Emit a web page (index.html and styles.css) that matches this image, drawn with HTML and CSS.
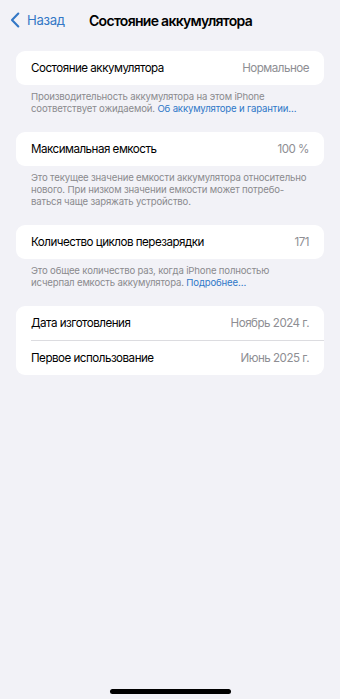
FILE: index.html
```html
<!DOCTYPE html>
<html lang="ru">
<head>
<meta charset="utf-8">
<link rel="stylesheet" href="styles.css">
</head>
<body>
<div class="screen">
  <header class="nav">
    <div class="back">
      <svg class="chev" width="10" height="16" viewBox="0 0 10 16"><path d="M8.3 1.5 L2 8 L8.3 14.5" fill="none" stroke="#3478c6" stroke-width="2.1" stroke-linecap="round" stroke-linejoin="round"/></svg>
      <span class="back-text">Назад</span>
    </div>
    <div class="title">Состояние аккумулятора</div>
  </header>

  <main class="content">
    <section class="group">
      <div class="card">
        <div class="row"><span class="label">Состояние аккумулятора</span><span class="value">Нормальное</span></div>
      </div>
      <p class="note">Производительность аккумулятора на этом iPhone<br>соответствует ожидаемой. <span class="link">Об аккумуляторе и гарантии…</span></p>
    </section>

    <section class="group">
      <div class="card">
        <div class="row"><span class="label">Максимальная емкость</span><span class="value">100 %</span></div>
      </div>
      <p class="note">Это текущее значение емкости аккумулятора относительно<br>нового. При низком значении емкости может потребо-<br>ваться чаще заряжать устройство.</p>
    </section>

    <section class="group">
      <div class="card">
        <div class="row"><span class="label">Количество циклов перезарядки</span><span class="value">171</span></div>
      </div>
      <p class="note">Это общее количество раз, когда iPhone полностью<br>исчерпал емкость аккумулятора. <span class="link">Подробнее…</span></p>
    </section>

    <section class="group">
      <div class="card">
        <div class="row divided"><span class="label">Дата изготовления</span><span class="value">Ноябрь 2024 г.</span></div>
        <div class="row"><span class="label">Первое использование</span><span class="value">Июнь 2025 г.</span></div>
      </div>
    </section>
  </main>

  <div class="home-bar"></div>
</div>
</body>
</html>
```
FILE: styles.css
```css
html, body {
  margin: 0;
  padding: 0;
  background: #f2f2f7;
}
body {
  font-family: Inter, "Noto Sans", sans-serif;
  color: #000;
  -webkit-font-smoothing: antialiased;
}
.screen {
  width: 340px;
  height: 699px;
  display: flex;
  flex-direction: column;
  overflow: hidden;
}
.nav {
  height: 40px;
  display: flex;
  align-items: center;
  padding-left: 10px;
  box-sizing: border-box;
}
.back {
  display: flex;
  align-items: center;
  gap: 7px;
  width: 79px;
}
.chev { display: block; }
.back-text {
  color: #3478c6;
  font-size: 13.2px;
  letter-spacing: -0.35px;
}
.title {
  font-size: 14px;
  font-weight: 600;
  letter-spacing: -0.7px;
}
.content {
  flex: 1;
  padding: 11px 16px 0;
  display: flex;
  flex-direction: column;
  gap: 17px;
}
.group { margin: 0; }
.card {
  background: #fff;
  border-radius: 9px;
  padding-left: 15px;
}
.row {
  height: 34px;
  display: flex;
  align-items: center;
  justify-content: space-between;
  padding-right: 15px;
  font-size: 11.6px;
  letter-spacing: -0.5px;
}
.divided {
  border-bottom: 0.5px solid #dcdce0;
}
.label { color: #000; }
.value { color: #8e8e93; }
.note {
  margin: 6px 0 0;
  padding: 0 2px 0 15px;
  font-size: 9.6px;
  line-height: 12px;
  letter-spacing: -0.17px;
  color: #8a8a8e;
  white-space: nowrap;
}
.link { color: #2f78c8; }
.home-bar {
  width: 121px;
  height: 5px;
  border-radius: 3px;
  background: #000;
  margin: 0 auto 5px;
}
```
